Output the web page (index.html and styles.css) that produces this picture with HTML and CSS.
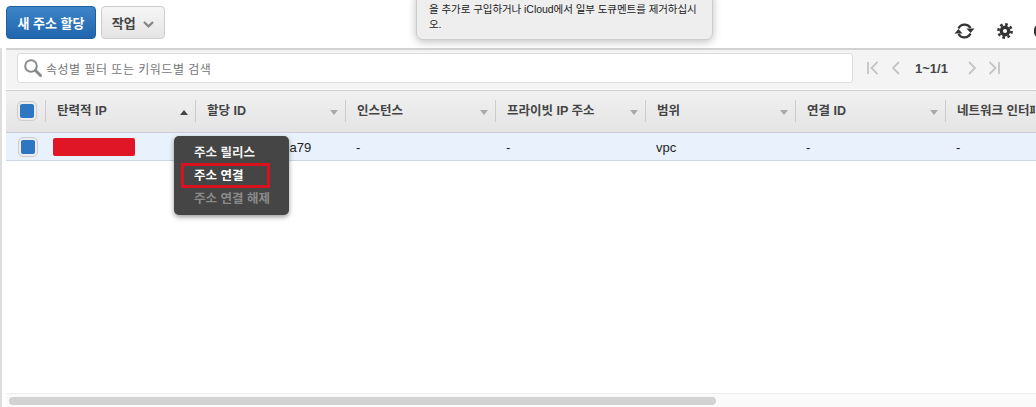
FILE: index.html
```html
<!DOCTYPE html>
<html lang="ko">
<head>
    <meta charset="UTF-8">
    <title>탄력적 IP</title>
    <link rel="stylesheet" href="styles.css">
</head>
<body>
    <div class="toolbar">
        <button class="btn btn-primary">새 주소 할당</button>
        <button class="btn btn-default">작업
            <svg class="caret" width="11" height="7" viewBox="0 0 11 7"><path d="M1 1l4.500 4.300L10 1" fill="none" stroke="#888" stroke-width="2.400"/></svg>
        </button>
        <div class="toolbar-icons">
            <svg class="refresh-icon" width="21" height="20" viewBox="0 0 21 20"><g fill="none" stroke="#333" stroke-width="2.300"><path d="M4.500 7.500A6.800 6.800 0 0 1 16.500 7"/><path d="M16.500 12.500A6.800 6.800 0 0 1 4.500 13"/></g><path d="M12.500 7.500h8l-4 4.500zM8.500 12.500H.5l4-4.500z" fill="#333"/></svg>
            <svg width="16" height="16" viewBox="0 0 16 16"><circle cx="8" cy="8" r="5.400" fill="#333"/><circle cx="8" cy="8" r="6.600" fill="none" stroke="#333" stroke-width="2.600" stroke-dasharray="2.600 2.580"/><circle cx="8" cy="8" r="2.100" fill="#fff"/></svg>
            <svg width="2" height="16" viewBox="0 0 2 16"><circle cx="8" cy="8" r="7" fill="none" stroke="#333" stroke-width="2.400"/></svg>
        </div>
    </div>

    <div class="notice">
        <p>을 추가로 구입하거나 iCloud에서 일부 도큐멘트를 제거하십시<br>오.</p>
    </div>

    <div class="content">
        <div class="filter-bar">
            <div class="search">
                <svg width="20" height="20" viewBox="0 0 20 20"><circle cx="8" cy="8" r="5.800" fill="none" stroke="#8a8a8a" stroke-width="2"/><path d="M12.500 12.500l5 5" stroke="#8a8a8a" stroke-width="3" stroke-linecap="round"/></svg>
                <span>속성별 필터 또는 키워드별 검색</span>
            </div>
            <div class="pager">
                <svg width="11" height="14" viewBox="0 0 11 14"><path d="M1 1v12M10.500 1L4.500 7l6 6" fill="none" stroke="#c4c4c4" stroke-width="1.800"/></svg>
                <svg class="pager-prev" width="8" height="14" viewBox="0 0 8 14"><path d="M7 1L1 7l6 6" fill="none" stroke="#c4c4c4" stroke-width="1.800"/></svg>
                <span class="pager-text">1~1/1</span>
                <svg class="pager-next" width="8" height="14" viewBox="0 0 8 14"><path d="M1 1l6 6-6 6" fill="none" stroke="#c4c4c4" stroke-width="1.800"/></svg>
                <svg class="pager-last" width="11" height="14" viewBox="0 0 11 14"><path d="M.5 1l6 6-6 6M10 1v12" fill="none" stroke="#c4c4c4" stroke-width="1.800"/></svg>
            </div>
        </div>

        <div class="table-head">
            <div class="col-check"><span class="check"></span></div>
            <div class="col">탄력적 IP<i class="sort sort-up"></i></div>
            <div class="col">할당 ID<i class="sort"></i></div>
            <div class="col">인스턴스<i class="sort"></i></div>
            <div class="col">프라이빗 IP 주소<i class="sort"></i></div>
            <div class="col">범위<i class="sort"></i></div>
            <div class="col">연결 ID<i class="sort"></i></div>
            <div class="col col-last">네트워크 인터페</div>
        </div>

        <div class="table-row">
            <div class="col-check col-check-row"><span class="check"></span></div>
            <div class="cell cell-ip"><span class="redacted"></span></div>
            <div class="cell">eipalloc-0c4ffea79</div>
            <div class="cell">-</div>
            <div class="cell">-</div>
            <div class="cell">vpc</div>
            <div class="cell">-</div>
            <div class="cell">-</div>
        </div>

        <div class="table-empty"></div>

        <div class="scrollbar"><div class="scroll-thumb"></div></div>
    </div>

    <ul class="context-menu">
        <li>주소 릴리스</li>
        <li class="highlighted">주소 연결</li>
        <li class="disabled">주소 연결 해제</li>
    </ul>
</body>
</html>
```

FILE: styles.css
```css
html, body {
    margin: 0;
    height: 407px;
    overflow: hidden;
}
body {
    position: relative;
    display: flex;
    flex-direction: column;
    font-family: "Liberation Sans", "Noto Sans CJK KR", sans-serif;
    font-size: 13px;
    color: #333;
    background: #fff;
}
.toolbar {
    height: 48px;
    flex: none;
    display: flex;
    align-items: flex-start;
    gap: 5px;
    padding: 6px 0 0 6px;
    box-sizing: border-box;
}
.btn {
    height: 33px;
    padding: 0;
    border-radius: 4px;
    font-family: inherit;
    font-size: 13px;
    font-weight: bold;
}
.btn-primary {
    width: 90px;
    color: #fff;
    background: linear-gradient(#3d84c8, #1f66ae);
    border: 1px solid #1d5f9f;
}
.btn-default {
    width: 64px;
    color: #444;
    background: linear-gradient(#f6f6f6, #e4e4e4);
    border: 1px solid #ccc;
}
.caret {
    margin-left: 4px;
}
.toolbar-icons {
    margin-left: auto;
    display: flex;
    align-items: center;
    gap: 21px;
    margin-top: 15px;
}
.refresh-icon {
    margin-right: 1px;
}
.notice {
    position: absolute;
    left: 416px;
    top: -10px;
    width: 297px;
    height: 50px;
    box-sizing: border-box;
    padding: 9px 12px 0;
    background: #eee;
    border: 1px solid #ccc;
    border-radius: 7px;
    box-shadow: 0 2px 8px rgba(0,0,0,0.25);
    font-size: 10.5px;
    letter-spacing: -0.05px;
    line-height: 15px;
    color: #222;
    white-space: nowrap;
}
.notice p {
    margin: 0;
    padding-top: 2px;
}
.content {
    flex: 1;
    display: flex;
    flex-direction: column;
    min-height: 0;
    border-left: 2px solid #ddd;
}
.filter-bar {
    height: 42px;
    flex: none;
    box-sizing: border-box;
    margin-left: 4px;
    padding: 3px 0 0 11px;
    display: flex;
    align-items: flex-start;
    background: #f4f4f4;
    border-top: 2px solid #d2d2d2;
    border-bottom: 1px solid #fff;
}
.search {
    width: 836px;
    height: 30px;
    box-sizing: border-box;
    padding-left: 5px;
    display: flex;
    align-items: center;
    gap: 3px;
    background: #fff;
    border: 1px solid #ddd;
    border-radius: 3px;
    font-size: 12px;
    letter-spacing: 0.5px;
    color: #777;
}
.pager {
    height: 30px;
    display: flex;
    align-items: center;
    margin-left: 14px;
}
.pager-prev {
    margin-left: 14px;
}
.pager-text {
    width: 36px;
    margin-left: 15px;
    font-size: 13px;
    font-weight: bold;
    color: #444;
}
.pager-next {
    margin-left: 17px;
}
.pager-last {
    margin-left: 13px;
}
.table-head {
    height: 43px;
    flex: none;
    margin-left: 4px;
    display: flex;
    align-items: center;
    box-sizing: border-box;
    padding-bottom: 1px;
    background: linear-gradient(#f1f1f1, #e4e4e4);
    border-top: 1px solid #ccc;
    border-bottom: 1px solid #ccd;
    font-size: 12.5px;
    font-weight: bold;
    color: #444;
    white-space: nowrap;
    overflow: hidden;
}
.col-check {
    width: 39px;
    flex: none;
    display: flex;
    justify-content: center;
    box-sizing: border-box;
    padding-left: 2px;
}
.col-check-row {
    padding-left: 4px;
}
.check {
    display: block;
    width: 14px;
    height: 14px;
    background: #2f76c2;
    border: 2px solid #ececec;
    outline: 1px solid #ccc;
    border-radius: 4px;
}
.col {
    width: 150px;
    flex: none;
    height: 22px;
    line-height: 22px;
    box-sizing: border-box;
    padding-left: 11px;
    position: relative;
    border-left: 1px solid #ccc;
}
.col-last {
    width: 90px;
    overflow: hidden;
}
.sort {
    position: absolute;
    right: 7px;
    top: 10px;
    border-left: 4px solid transparent;
    border-right: 4px solid transparent;
    border-top: 5px solid #aaa;
}
.sort-up {
    border-top: 0;
    border-bottom: 5px solid #444;
}
.table-row {
    height: 28px;
    flex: none;
    margin-left: 4px;
    display: flex;
    align-items: center;
    box-sizing: border-box;
    padding-top: 1px;
    background: #e9f2fc;
    border-bottom: 1px solid #ccd6e2;
    color: #222;
}
.cell {
    width: 150px;
    flex: none;
    padding-left: 11px;
    box-sizing: border-box;
    white-space: nowrap;
}
.cell-ip {
    padding-left: 8px;
}
.redacted {
    display: block;
    width: 82px;
    height: 18px;
    background: #e01525;
    border-radius: 2px;
}
.table-empty {
    flex: 1;
}
.scrollbar {
    height: 14px;
    flex: none;
    margin-left: 4px;
    box-sizing: border-box;
    padding: 3px 0 0 3px;
    background: #fafafa;
    border-top: 1px solid #eee;
}
.scroll-thumb {
    width: 707px;
    height: 8px;
    background: #d2d2d2;
    border-radius: 4px;
}
.context-menu {
    position: absolute;
    left: 174px;
    top: 136px;
    width: 115px;
    height: 79px;
    margin: 0;
    padding: 6px 0 0;
    box-sizing: border-box;
    list-style: none;
    background: #454545;
    border-radius: 5px;
    box-shadow: 0 2px 5px rgba(0,0,0,0.4);
    font-size: 12.5px;
    font-weight: bold;
    color: #f2f2f2;
}
.context-menu li {
    height: 23px;
    line-height: 23px;
    padding-left: 20px;
    white-space: nowrap;
}
.context-menu .highlighted {
    position: relative;
    color: #fff;
}
.context-menu .highlighted::after {
    content: "";
    position: absolute;
    left: 7px;
    top: -2px;
    width: 89px;
    height: 25px;
    box-sizing: border-box;
    border: 3px solid #d9121f;
}
.context-menu .disabled {
    color: #8a8a8a;
}
```
